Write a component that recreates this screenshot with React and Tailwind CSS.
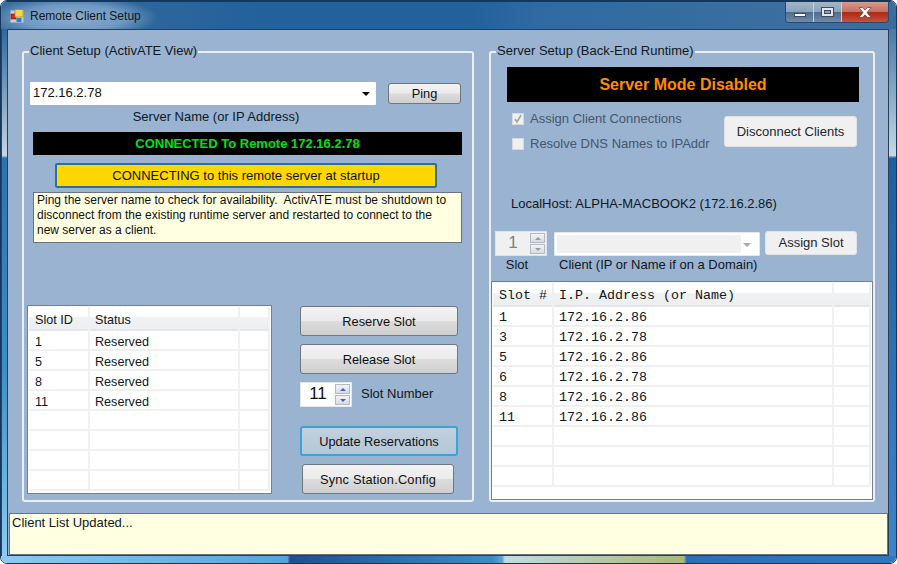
const reservedRows = ["1", "5", "8", "11", "", "", "", ""];
const clientRows = [
  ["1", "172.16.2.86"],
  ["3", "172.16.2.78"],
  ["5", "172.16.2.86"],
  ["6", "172.16.2.78"],
  ["8", "172.16.2.86"],
  ["11", "172.16.2.86"],
  ["", ""],
  ["", ""],
  ["", ""],
];

function AppIcon() {
  return (
    <svg width="14" height="14" viewBox="0 0 14 14" className="shrink-0">
      <rect x="0.5" y="1.5" width="13" height="12" fill="#c9ced6" />
      <rect x="1" y="5" width="5" height="5" fill="#d8261c" stroke="#7d1710" strokeWidth="0.6" />
      <rect x="5" y="0.5" width="8" height="7.5" fill="#f8d648" stroke="#a8892a" strokeWidth="0.7" />
      <rect x="6.5" y="9" width="5" height="4" fill="#3a78d0" />
    </svg>
  );
}

function WindowControls() {
  return (
    <div className="absolute right-[7px] top-0 flex h-[21px] w-[104px] overflow-hidden rounded-b-[4px] border border-t-0 border-[#274a6e]">
      <div className="flex w-[28px] items-end justify-center border-r border-[#c3d2e2] bg-[linear-gradient(#a3b5c8_0%,#8da3ba_48%,#4f6e8f_52%,#6f8ba8_100%)] pb-[5px]">
        <div className="h-[4px] w-[12px] border border-[#3c4c5e] bg-white" />
      </div>
      <div className="flex w-[28px] items-center justify-center border-r border-[#c3d2e2] bg-[linear-gradient(#a3b5c8_0%,#8da3ba_48%,#4f6e8f_52%,#6f8ba8_100%)]">
        <div className="h-[10px] w-[13px] border border-[#3c4c5e] bg-[#dfe6ee] p-[2px]">
          <div className="h-full w-full border border-[#3c4c5e] bg-[#8da3ba]" />
        </div>
      </div>
      <div className="flex flex-1 items-center justify-center bg-[linear-gradient(#d69a8f_0%,#c8705f_48%,#a92a17_52%,#c9503a_100%)]">
        <svg width="14" height="11" viewBox="0 0 14 11">
          <path d="M1 0.5h3.5L7 3.2 9.5 0.5H13L9 5.5l4 5H9.5L7 7.8 4.5 10.5H1l4-5z" fill="#fff" stroke="#5c3a36" strokeWidth="0.7" />
        </svg>
      </div>
    </div>
  );
}

function GroupBox({ title, width, children }) {
  return (
    <div className={`relative h-[451px] shrink-0 rounded-[3px] border-2 border-[#eaf0f6] ${width}`}>
      <div className="absolute -top-[10px] left-[5px] h-[16px] whitespace-nowrap bg-[#9ab3d1] px-[1px] text-[13px] leading-[16px] text-[#101820]">
        {title}
      </div>
      {children}
    </div>
  );
}

function GrayButton({ children, className = "" }) {
  return (
    <button className={`rounded-[3px] border border-[#6f7680] bg-[linear-gradient(#f3f3f3_0%,#ebebeb_48%,#dcdcdc_52%,#cfcfcf_100%)] text-[12.8px] text-[#101010] ${className}`}>
      {children}
    </button>
  );
}

function FlatButton({ children, className = "" }) {
  return (
    <button className={`rounded-[3px] border border-[#dfe3e8] bg-[#f0f0f0] text-[13px] text-[#1c2530] ${className}`}>
      {children}
    </button>
  );
}

function Spinner({ value, disabled }) {
  return (
    <div className={`flex h-[25px] w-[52px] items-center border ${disabled ? "border-[#dfe3e8] bg-[#f0f0f0]" : "border-[#e4e8ee] bg-white"}`}>
      <div className={`flex-1 pb-[2px] text-center text-[17px] ${disabled ? "text-[#7a828c]" : "text-[#101010]"}`}>{value}</div>
      <div className="mr-[1px] flex w-[15px] flex-col gap-[1px]">
        <div className="flex h-[10px] items-center justify-center border border-[#b4bac4] bg-[linear-gradient(#f4f4f6,#d8dbe4)]">
          <div className={`h-0 w-0 border-x-[3px] border-b-[3px] border-x-transparent ${disabled ? "border-b-[#9a9a9a]" : "border-b-[#4a5fa8]"}`} />
        </div>
        <div className="flex h-[10px] items-center justify-center border border-[#b4bac4] bg-[linear-gradient(#f4f4f6,#d8dbe4)]">
          <div className={`h-0 w-0 border-x-[3px] border-t-[3px] border-x-transparent ${disabled ? "border-t-[#9a9a9a]" : "border-t-[#4a5fa8]"}`} />
        </div>
      </div>
    </div>
  );
}

function Grid({ className, cols, head, rows, cellClass }) {
  return (
    <div className={`overflow-hidden border border-[#76808c] bg-white p-[1px] ${className}`}>
      <div className={`grid h-[24px] items-center border-b-2 border-[#e4e6ea] bg-[linear-gradient(#ffffff_0%,#ffffff_45%,#f1f2f4_46%,#eceef0_100%)] ${cols}`}>
        {head.map((h, i) => (
          <div key={i} className={`h-full border-r-2 border-[#eef0f2] leading-[25px] ${i === 0 ? "pl-[6px]" : "pl-[5px]"} ${cellClass}`}>
            {h}
          </div>
        ))}
      </div>
      {rows.map((row, r) => (
        <div key={r} className={`grid h-[20px] border-b-2 border-[#f0f0f0] ${cols}`}>
          {row.map((c, i) => (
            <div key={i} className={`h-full border-r-2 border-[#f0f0f0] leading-[21px] ${i === 0 ? "pl-[6px]" : "pl-[5px]"} ${cellClass}`}>
              {c}
            </div>
          ))}
        </div>
      ))}
    </div>
  );
}

function ClientGroup() {
  return (
    <GroupBox title="Client Setup (ActivATE View)" width="w-[452px]">
      <div className="mt-[29px] flex items-start pl-[6px]">
        <div className="relative flex h-[23px] w-[346px] items-center rounded-[1px] bg-white pb-[2px] pl-[3px] text-[13px] text-[#101010]">
          172.16.2.78
          <div className="absolute right-[6px] top-[10px] h-0 w-0 border-x-[4px] border-t-[4px] border-x-transparent border-t-black" />
        </div>
        <GrayButton className="ml-[12px] mt-[1px] h-[21px] w-[73px]">Ping</GrayButton>
      </div>
      <div className="mt-[2px] w-[384px] text-center text-[13px] leading-[20px] text-[#101820]">Server Name (or IP Address)</div>
      <div className="ml-[9px] mt-[5px] h-[23px] w-[429px] bg-black text-center text-[13px] font-bold leading-[23px] text-[#00e010]">
        CONNECTED To Remote 172.16.2.78
      </div>
      <div className="ml-[31px] mt-[8px] h-[25px] w-[382px] rounded-[2px] border-2 border-[#2f6f9e] bg-[#ffd700] text-center text-[13px] leading-[21px] text-[#101010]">
        CONNECTING to this remote server at startup
      </div>
      <div className="ml-[9px] mt-[4px] h-[51px] w-[429px] border border-[#6b7280] bg-[#ffffe1] pl-[3px] pr-[9px] text-[12px] leading-[15px] text-[#101010]">
        Ping the server name to check for availability.&nbsp; ActivATE must be shutdown to disconnect from the existing runtime server and restarted to connect to the new server as a client.
      </div>
      <div className="mt-[62px] flex items-start pl-[3px]">
        <Grid
          className="h-[189px] w-[245px]"
          cols="grid-cols-[61px_150px_1fr]"
          head={["Slot ID", "Status", ""]}
          rows={reservedRows.map((id) => [id, id ? "Reserved" : "", ""])}
          cellClass="pt-[1px] text-[12.6px] text-[#101820]"
        />
        <div className="ml-[28px] flex w-[158px] flex-col pt-[1px]">
          <GrayButton className="h-[30px] w-full pt-[1px]">Reserve Slot</GrayButton>
          <GrayButton className="mt-[8px] h-[30px] w-full pt-[1px]">Release Slot</GrayButton>
          <div className="mt-[8px] flex items-center">
            <Spinner value="11" />
            <span className="ml-[9px] pb-[2px] text-[13px] text-[#101820]">Slot Number</span>
          </div>
          <button className="mt-[19px] h-[30px] w-full rounded-[3px] border-2 border-[#3aa4d8] bg-[linear-gradient(#c3d1de,#b4c6d6)] pt-[1px] text-[12.8px] text-[#101010]">
            Update Reservations
          </button>
          <GrayButton className="ml-[2px] mt-[8px] h-[30px] w-[152px] pt-[1px] tracking-[0.2px]">Sync Station.Config</GrayButton>
        </div>
      </div>
    </GroupBox>
  );
}

function Checkbox({ checked }) {
  return (
    <div className="flex h-[12px] w-[12px] items-center justify-center border border-[#d5dae0] bg-[#f0f0f0]">
      {checked && (
        <svg width="10" height="10" viewBox="0 0 10 10">
          <path d="M2 5l2 3 4-7" fill="none" stroke="#a0a4aa" strokeWidth="1.6" />
        </svg>
      )}
    </div>
  );
}

function ServerGroup() {
  return (
    <GroupBox title="Server Setup (Back-End Runtime)" width="w-[386px]">
      <div className="ml-[16px] mt-[14px] h-[35px] w-[352px] bg-black text-center text-[16px] font-bold leading-[35px] text-[#ff8c00]">
        Server Mode Disabled
      </div>
      <div className="ml-[21px] mt-[7px] flex items-start">
        <div className="flex w-[212px] flex-col gap-[6px] text-[13px] leading-[19px] text-[#46566c]">
          <div className="flex items-center gap-[6px]">
            <Checkbox checked />
            <span>Assign Client Connections</span>
          </div>
          <div className="flex items-center gap-[6px]">
            <Checkbox />
            <span>Resolve DNS Names to IPAddr</span>
          </div>
        </div>
        <FlatButton className="mt-[7px] h-[31px] w-[133px]">Disconnect Clients</FlatButton>
      </div>
      <div className="ml-[20px] mt-[41px] text-[13px] leading-[20px] text-[#101820]">LocalHost: ALPHA-MACBOOK2 (172.16.2.86)</div>
      <div className="ml-[4px] mt-[17px] flex items-start">
        <Spinner value="1" disabled />
        <div className="relative ml-[7px] mt-[1px] flex h-[24px] w-[206px] items-center rounded-[1px] border border-[#e4e8ee] bg-white p-[2px]">
          <div className="h-full w-[184px] bg-[#f0f0f0]" />
          <div className="absolute right-[8px] top-[10px] h-0 w-0 border-x-[4px] border-t-[4px] border-x-transparent border-t-[#a8a8a8]" />
        </div>
        <FlatButton className="ml-[5px] h-[24px] w-[92px]">Assign Slot</FlatButton>
      </div>
      <div className="ml-[3px] flex text-[13px] leading-[18px] text-[#101820]">
        <div className="w-[46px] text-center">Slot</div>
        <div className="ml-[19px]">Client (IP or Name if on a Domain)</div>
      </div>
      <Grid
        className="mt-[7px] h-[219px] w-[382px]"
        cols="grid-cols-[61px_280px_1fr]"
        head={["Slot #", "I.P. Address (or Name)", ""]}
        rows={clientRows.map(([slot, ip]) => [slot, ip, ""])}
        cellClass="font-['Liberation_Mono',monospace] text-[13.33px] text-[#101820]"
      />
    </GroupBox>
  );
}

export default function App() {
  return (
    <div className="h-[564px] w-[897px] overflow-hidden bg-white font-['Liberation_Sans',Arial,sans-serif]">
      <div className="flex h-full w-full flex-col overflow-hidden rounded-b-[7px] rounded-t-[7px] border border-[#14365a]">
        <div className="relative flex h-[28px] shrink-0 items-center gap-[6px] border-t border-[#123a62] bg-[radial-gradient(ellipse_85px_22px_at_72px_16px,#8aacce_0%,#7099c2_60%,transparent_100%),linear-gradient(90deg,#3a6c9c_0%,#22619b_30%,#22619b_52%,#2f6aa2_60%,#3c6f9f_90%,#3a6c9e_100%)] pl-[9px] pt-[1px] text-[12px] text-[#101820]">
          <AppIcon />
          <span>Remote Client Setup</span>
          <WindowControls />
        </div>
        <div className="flex h-[527px] shrink-0">
          <div className="w-[6px] shrink-0 border-l border-[#1a4a6a] bg-[linear-gradient(#2f689c_0%,#c5d5e0_24%,#2b73ad_24.5%,#3a90c4_65%,#8ccaf0_100%)]" />
          <div className="flex h-[527px] w-[882px] shrink-0 flex-col border border-[#2a3f57] bg-[#9ab3d1]">
            <div className="flex gap-[15px] pl-[14px] pt-[21px]">
              <ClientGroup />
              <ServerGroup />
            </div>
            <div className="ml-[1px] mt-[11px] h-[43px] w-[879px] border border-[#6b7280] bg-[#ffffe1] pl-[2px] text-[13px] leading-[17px] text-[#101820]">
              Client List Updated...
            </div>
          </div>
          <div className="flex-1 bg-[linear-gradient(#4a7aa8_0%,#c5d8e5_24%,#1d5e9e_24.5%,#3d85c8_100%)]" />
        </div>
        <div className="flex-1 bg-[linear-gradient(90deg,#8ccaf0_0%,#55a5d8_32%,#1f4f90_32.3%,#3a8fc0_55%,#5aa5d8_56%,#c0dce0_56.3%,#a8b878_76.3%,#2a70b8_76.6%,#2f78c0_100%)]" />
      </div>
    </div>
  );
}
